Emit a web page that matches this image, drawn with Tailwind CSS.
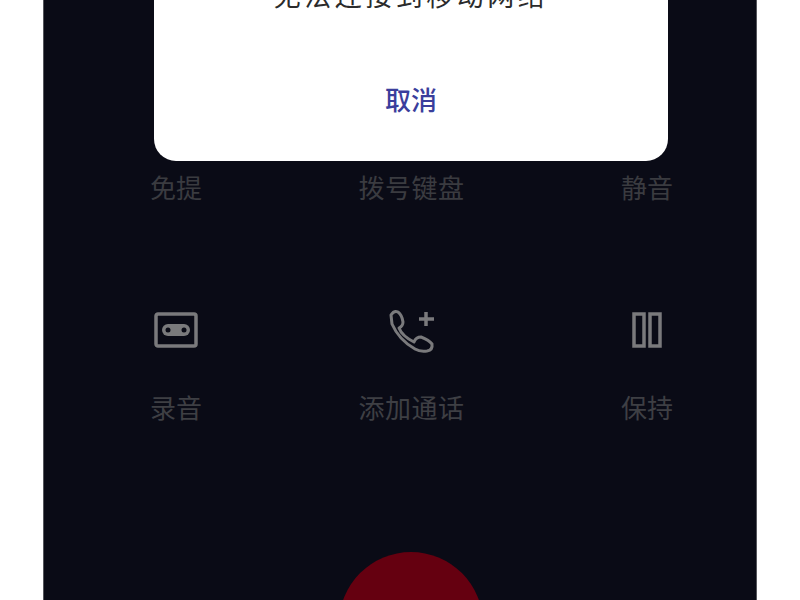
<!DOCTYPE html>
<html lang="zh-CN">
<head>
  <meta charset="UTF-8" />
  <title>通话</title>
  <script src="https://cdn.jsdelivr.net/npm/@tailwindcss/browser@4"></script>
</head>
<body class="bg-white font-['Noto_Sans_CJK_SC','Noto_Sans',sans-serif]">
<div class="h-[600px] w-[800px] overflow-hidden flex justify-center">
  <!-- phone screen -->
  <div class="relative w-[714px] h-[600px] bg-[#0a0b16] border-l border-r border-[#55565c] overflow-hidden flex flex-col items-center pt-[167px]">

    <!-- dialog -->
    <div class="absolute left-[110px] top-[-100px] w-[514px] h-[261px] bg-white rounded-[22px] flex flex-col items-center">
      <p class="mt-[75px] text-[27px] leading-[40px] tracking-[3.5px] text-[#2b2b2b]">无法连接到移动网络</p>
      <button class="mt-[65px] text-[26px] leading-[38px] font-medium text-[#3a3e9c]">取消</button>
    </div>

    <!-- row 1 -->
    <div class="w-full pl-[106px] pr-[83px] flex justify-between text-[26px] leading-[40px] text-[#3a3b40]">
      <span>免提</span>
      <span class="tracking-[0.5px]">拨号键盘</span>
      <span>静音</span>
    </div>

    <!-- row 2 -->
    <div class="mt-[105px] w-full pl-[106px] pr-[83px] flex justify-between text-[#3e3f44]">
      <div class="flex flex-col items-center gap-[39px] w-[52px]">
        <svg width="44" height="36" viewBox="0 0 44 36" fill="none" class="shrink-0">
          <rect x="2" y="2" width="40" height="32" rx="2" stroke="#7a7a7c" stroke-width="3.5"/>
          <rect x="8" y="12" width="28" height="12" rx="6" fill="#7a7a7c"/>
          <circle cx="14" cy="18" r="2.5" fill="#0a0b16"/>
          <circle cx="30" cy="18" r="2.5" fill="#0a0b16"/>
        </svg>
        <span class="text-[26px] leading-[40px]">录音</span>
      </div>
      <div class="flex flex-col items-center gap-[39px] w-[105px]">
        <svg width="46" height="36" viewBox="0 0 46 36" fill="none" class="shrink-0 overflow-visible">
          <path d="M2 3 Q5 -2 9 0 Q13 3 14 10 Q14 14 10 16 Q13 24 25 30 Q27 25 32 25 Q40 28 43 32 Q44 38 38 39 Q31 40 26 37 Q10 28 3 12 Z" stroke="#7a7a7c" stroke-width="3" stroke-linejoin="round"/>
          <path d="M37 0 V14 M30 7 H45" stroke="#7a7a7c" stroke-width="3.5"/>
        </svg>
        <span class="text-[26px] leading-[40px] whitespace-nowrap tracking-[0.5px]">添加通话</span>
      </div>
      <div class="flex flex-col items-center gap-[39px] w-[52px]">
        <svg width="30" height="36" viewBox="0 0 30 36" fill="none" class="shrink-0">
          <rect x="2" y="2" width="10" height="32" stroke="#7a7a7c" stroke-width="3.5"/>
          <rect x="18" y="2" width="10" height="32" stroke="#7a7a7c" stroke-width="3.5"/>
        </svg>
        <span class="text-[26px] leading-[40px]">保持</span>
      </div>
    </div>

    <!-- hang up -->
    <div class="absolute left-[295px] top-[552px] w-[144px] h-[144px] rounded-full bg-[#650010]"></div>
  </div>
</div>
</body>
</html>
